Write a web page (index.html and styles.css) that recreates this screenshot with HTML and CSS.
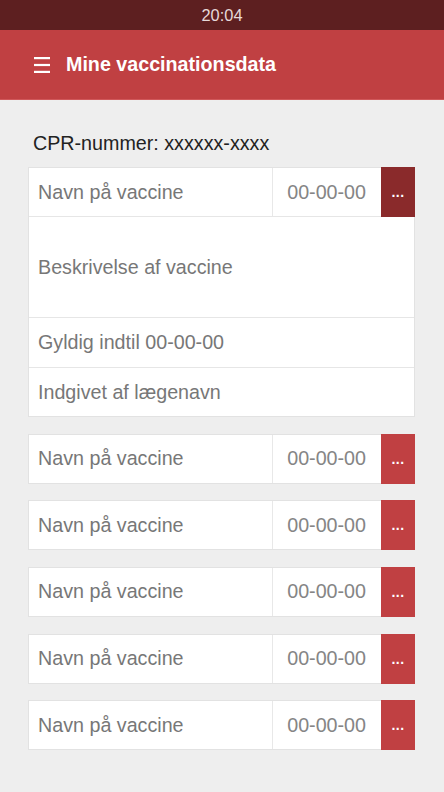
FILE: index.html
```html
<!DOCTYPE html>
<html lang="da">
<head>
<meta charset="utf-8">
<title>Mine vaccinationsdata</title>
<link rel="stylesheet" href="styles.css">
</head>
<body>
<div class="statusbar">20:04</div>
<header class="appbar">
  <svg class="menu" width="18" height="18" viewBox="0 0 18 18" aria-hidden="true">
    <rect x="1" y="1" width="16" height="2.2" fill="#fff"/>
    <rect x="1" y="7.9" width="16" height="2.2" fill="#fff"/>
    <rect x="1" y="14.8" width="16" height="2.2" fill="#fff"/>
  </svg>
  <h1 class="title">Mine vaccinationsdata</h1>
</header>
<main class="content">
  <p class="cpr">CPR-nummer: xxxxxx-xxxx</p>
  <section class="card">
    <div class="row head">
      <span class="name">Navn på vaccine</span>
      <span class="date">00-00-00</span>
      <span class="more active">...</span>
    </div>
    <div class="row desc">Beskrivelse af vaccine</div>
    <div class="row info">Gyldig indtil 00-00-00</div>
    <div class="row info last">Indgivet af lægenavn</div>
  </section>
  <section class="card">
    <div class="row head">
      <span class="name">Navn på vaccine</span>
      <span class="date">00-00-00</span>
      <span class="more">...</span>
    </div>
  </section>
  <section class="card">
    <div class="row head">
      <span class="name">Navn på vaccine</span>
      <span class="date">00-00-00</span>
      <span class="more">...</span>
    </div>
  </section>
  <section class="card">
    <div class="row head">
      <span class="name">Navn på vaccine</span>
      <span class="date">00-00-00</span>
      <span class="more">...</span>
    </div>
  </section>
  <section class="card">
    <div class="row head">
      <span class="name">Navn på vaccine</span>
      <span class="date">00-00-00</span>
      <span class="more">...</span>
    </div>
  </section>
  <section class="card">
    <div class="row head">
      <span class="name">Navn på vaccine</span>
      <span class="date">00-00-00</span>
      <span class="more">...</span>
    </div>
  </section>
</main>
</body>
</html>
```

FILE: styles.css
```css
html, body {
  margin: 0;
  padding: 0;
}
body {
  background: #eeeeee;
  font-family: "Liberation Sans", Arial, sans-serif;
  width: 444px;
  min-height: 792px;
}
.statusbar {
  height: 30px;
  background: #5d1f20;
  color: #e6d9d9;
  font-size: 16.4px;
  line-height: 30px;
  text-align: center;
}
.appbar {
  height: 70px;
  box-sizing: border-box;
  background: #c04042;
  border-bottom: 1px solid #d0585a;
  display: flex;
  align-items: center;
  padding-left: 33px;
  gap: 15px;
}
.menu {
  display: block;
  margin-top: 1px;
}
.title {
  margin: 0;
  color: #fff;
  font-size: 19.7px;
  font-weight: bold;
}
.content {
  padding: 31px 29px 30px 28px;
  display: flex;
  flex-direction: column;
  gap: 16.67px;
}
.cpr {
  margin: 0 0 -4.67px 5px;
  font-size: 19.7px;
  line-height: 24px;
  color: #222;
}
.card {
  background: #fff;
  border: 1px solid #e2e2e2;
}
.row {
  display: flex;
  align-items: center;
  font-size: 19.7px;
  color: #777;
  padding-left: 9px;
}
.row + .row {
  border-top: 1px solid #e6e6e6;
}
.head {
  height: 48px;
  align-items: stretch;
}
.name {
  flex: 1;
  display: flex;
  align-items: center;
}
.date {
  width: 93px;
  border-left: 1px solid #e8e8e8;
  display: flex;
  align-items: center;
  justify-content: flex-end;
  padding-right: 15px;
  color: #858585;
}
.more {
  width: 34px;
  margin: -1px -1px -1px 0;
  background: #c04042;
  color: #fff;
  font-size: 14px;
  font-weight: bold;
  letter-spacing: 0.5px;
  display: flex;
  align-items: center;
  justify-content: center;
  line-height: 1;
}
.more.active {
  background: #8a2a2b;
}
.desc {
  height: 100px;
}
.info {
  height: 49px;
}
.info.last {
  height: 48px;
}
```
